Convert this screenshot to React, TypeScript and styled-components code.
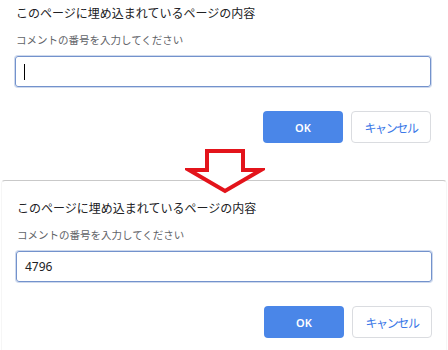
import React, { FC } from "react";
import styled, { createGlobalStyle } from "styled-components";

const GlobalStyle = createGlobalStyle`
  html, body {
    margin: 0;
    padding: 0;
    background: #fff;
  }
  body {
    font-family: "Noto Sans", "Noto Sans CJK JP", sans-serif;
  }
`;

interface PromptProps {
  value?: string;
  focused?: boolean;
  top: number;
  framed?: boolean;
}

const Prompt: FC<PromptProps> = ({ value, focused, top, framed }) => (
  <Dialog $top={top} $framed={framed}>
    <Title>このページに埋め込まれているページの内容</Title>
    <Message>コメントの番号を入力してください</Message>
    <Field>
      {value}
      {focused && <Caret />}
    </Field>
    <Buttons>
      <OkButton>OK</OkButton>
      <CancelButton>キャンセル</CancelButton>
    </Buttons>
  </Dialog>
);

const App: FC = () => {
  return (
    <>
      <GlobalStyle />
      <Page>
        <Prompt top={3} focused />
        <Prompt top={17} value="4796" framed />
        <Arrow viewBox="0 0 80 50" width="80" height="50">
          <polygon
            points="22,4 58,4 58,23 76,23 40,44 4,23 22,23"
            fill="#fff"
            stroke="#e3141b"
            strokeWidth="4"
            strokeLinejoin="miter"
          />
        </Arrow>
      </Page>
    </>
  );
};

export default App;

const Page = styled.div`
  position: relative;
  width: 448px;
  height: 350px;
  overflow: hidden;
  background: #fff;
`;

const Dialog = styled.div<{ $top: number; $framed?: boolean }>`
  display: flex;
  flex-direction: column;
  height: 180px;
  box-sizing: border-box;
  padding: ${(p) => p.$top}px ${(p) => (p.$framed ? 14 : 17)}px 0
    ${(p) => (p.$framed ? 14 : 15)}px;
  ${(p) =>
    p.$framed &&
    `
    margin: 0 1px;
    border: 1px solid #f6f6f6;
    border-top-color: #c9c9c9;
    border-bottom: none;
    border-radius: 4px 4px 0 0;
  `}
`;

const Title = styled.div`
  font-family: "Noto Sans CJK JP", sans-serif;
  font-size: 12px;
  line-height: 20px;
  color: #202124;
  padding-left: 1px;
`;

const Message = styled.div`
  margin-top: 7px;
  font-family: "Noto Sans CJK JP", sans-serif;
  font-size: 10.5px;
  line-height: 20px;
  color: #5f6368;
  padding-left: 1px;
`;

const Field = styled.div`
  margin-top: 6px;
  height: 31px;
  box-sizing: border-box;
  display: flex;
  align-items: center;
  padding: 0 8px;
  border: 1px solid #7392cc;
  box-shadow: 0 0 0 1px rgba(115, 146, 204, 0.35);
  border-radius: 3px;
  font-family: "Noto Sans", sans-serif;
  font-size: 12px;
  color: #202124;
`;

const Caret = styled.span`
  display: block;
  width: 1px;
  height: 16px;
  background: #000;
`;

const Buttons = styled.div`
  margin-top: 24px;
  display: flex;
  justify-content: flex-end;
  gap: 8px;
`;

const OkButton = styled.div`
  width: 80px;
  height: 32px;
  display: flex;
  align-items: center;
  justify-content: center;
  background: #4a86e8;
  border-radius: 4px;
  color: #fff;
  font-family: "Noto Sans", sans-serif;
  font-size: 11px;
  font-weight: 600;
`;

const CancelButton = styled.div`
  width: 80px;
  height: 32px;
  box-sizing: border-box;
  display: flex;
  align-items: center;
  justify-content: center;
  background: #fff;
  border: 1px solid #dadce0;
  border-radius: 4px;
  color: #3b78e7;
  font-family: "Noto Sans CJK JP", sans-serif;
  font-size: 12px;
  letter-spacing: -1.4px;
`;

const Arrow = styled.svg`
  position: absolute;
  left: 185px;
  top: 147px;
`;
